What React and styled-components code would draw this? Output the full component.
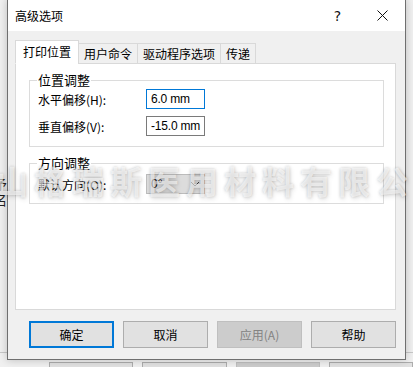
import React from "react";
import styled, { createGlobalStyle } from "styled-components";

const GlobalStyle = createGlobalStyle`
	html, body {
		margin: 0;
		padding: 0;
		background: #f0f0f0;
		font-family: "Noto Sans CJK SC", "Microsoft YaHei", sans-serif;
		font-size: 12px;
		color: #000;
	}
`;

const Desktop = styled.div`
	position: relative;
	width: 413px;
	height: 367px;
	overflow: hidden;
	background: #f0f0f0;
	display: flex;
	flex-direction: column;
`;

const BackWindow = styled.div`
	flex: 1;
	display: flex;
	flex-direction: column;
	justify-content: flex-end;
`;

const BackStrip = styled.div`
	flex: 1;
	width: 7px;
	display: flex;
	flex-direction: column;
	padding-top: 7px;
	font-size: 13px;
	line-height: 16px;
	overflow: hidden;
	color: #222;
	span {
		margin-left: -6px;
	}
`;

const BackGap = styled.div`
	height: ${(p) => p.$h}px;
`;

const BackRule = styled.div`
	height: 1px;
	background: #c8c8c8;
	margin-bottom: 9px;
`;

const BackButtons = styled.div`
	display: flex;
	gap: 9px;
	padding-left: 49px;
	height: 5px;
`;

const BackButton = styled.div`
	width: 84px;
	height: 10px;
	background: ${(p) => (p.$disabled ? "#cccccc" : "#e1e1e1")};
	border: 1px solid ${(p) => (p.$disabled ? "#bfbfbf" : "#adadad")};
`;

const Dialog = styled.div`
	position: absolute;
	left: 7px;
	top: -1px;
	width: 397px;
	height: 359px;
	border: 1px solid #6f6f6f;
	background: #f0f0f0;
	box-shadow: 0 0 8px rgba(0, 0, 0, 0.22);
	display: flex;
	flex-direction: column;
`;

const TitleBar = styled.div`
	height: 31px;
	background: #fff;
	display: flex;
	align-items: center;
	padding-left: 7px;
`;

const Title = styled.div`
	flex: 1;
	font-size: 12px;
	padding-bottom: 1px;
`;

const TitleButton = styled.div`
	width: 45px;
	height: 31px;
	display: flex;
	align-items: center;
	justify-content: center;
	font-family: "Segoe UI", "DejaVu Sans", sans-serif;
	font-size: 14px;
	color: #111;
`;

const Body = styled.div`
	flex: 1;
	display: flex;
	flex-direction: column;
	padding: 9px 8px 0 7px;
`;

const TabStrip = styled.div`
	display: flex;
	align-items: flex-end;
	height: 24px;
	position: relative;
	z-index: 1;
	margin-bottom: -1px;
`;

const Tab = styled.div`
	height: ${(p) => (p.$active ? "24px" : "21px")};
	padding: 0 ${(p) => (p.$active ? "7px" : "5px")};
	box-sizing: border-box;
	display: flex;
	align-items: center;
	border: 1px solid #d9d9d9;
	border-bottom: ${(p) => (p.$active ? "1px solid #fff" : "1px solid #d9d9d9")};
	margin-left: ${(p) => (p.$first ? "0" : "-1px")};
	background: ${(p) => (p.$active ? "#fff" : "#f0f0f0")};
	font-size: 12px;
	padding-bottom: 1px;
	white-space: nowrap;
`;

const Panel = styled.div`
	width: 381px;
	height: 247px;
	box-sizing: border-box;
	background: #fff;
	border: 1px solid #d9d9d9;
	padding: 8px 11px 0 13px;
	display: flex;
	flex-direction: column;
	gap: 8px;
`;

const Group = styled.fieldset`
	margin: 0;
	padding: ${(p) => p.$pt}px 8px 0 8px;
	border: 1px solid #dcdcdc;
	min-width: 0;
	display: flex;
	flex-direction: column;
	gap: 7px;
	height: ${(p) => p.$h}px;
	box-sizing: border-box;
`;

const Legend = styled.legend`
	padding: 0 1px;
	margin-left: -1px;
	font-size: 13px;
	line-height: 16px;
`;

const Row = styled.div`
	display: flex;
	align-items: center;
	height: 20px;
`;

const Label = styled.div`
	width: 108px;
	font-size: 12px;
	white-space: nowrap;
`;

const Input = styled.div`
	width: 59px;
	height: 20px;
	box-sizing: border-box;
	border: 1px solid ${(p) => (p.$focus ? "#0078d7" : "#7a7a7a")};
	background: #fff;
	display: flex;
	align-items: center;
	padding-left: 4px;
	font-family: "Segoe UI", "Liberation Sans", sans-serif;
	font-size: 12px;
	letter-spacing: -0.2px;
`;

const Combo = styled.div`
	width: 59px;
	height: 20px;
	box-sizing: border-box;
	border: 1px solid #bcbcbc;
	background: #dcdcdc;
	display: flex;
	align-items: center;
	justify-content: space-between;
	padding: 0 4px 0 4px;
	font-family: "Segoe UI", "Liberation Sans", sans-serif;
	font-size: 12px;
`;

const Footer = styled.div`
	display: flex;
	gap: 9px;
	padding: 11px 0 0 14px;
`;

const Button = styled.div`
	width: 85px;
	height: 27px;
	box-sizing: border-box;
	display: flex;
	align-items: center;
	justify-content: center;
	font-size: 12px;
	background: ${(p) => (p.$disabled ? "#cccccc" : "#e1e1e1")};
	border: ${(p) =>
		p.$primary ? "2px solid #0078d7" : p.$disabled ? "1px solid #bfbfbf" : "1px solid #adadad"};
	color: ${(p) => (p.$disabled ? "#838383" : "#000")};
	padding-bottom: 1px;
`;

const Watermark = styled.div`
	position: absolute;
	left: -4px;
	top: 157px;
	font-size: 32px;
	font-weight: 700;
	letter-spacing: 6px;
	white-space: nowrap;
	color: rgba(255, 255, 255, 0.6);
	text-shadow: 0 0 3px rgba(0, 0, 0, 0.2), 1px 2px 5px rgba(0, 0, 0, 0.12);
	pointer-events: none;
`;

const Chevron = () => (
	<svg width="10" height="6" viewBox="0 0 10 6">
		<path d="M1 1 L5 5 L9 1" fill="none" stroke="#444" strokeWidth="1" />
	</svg>
);

const CloseIcon = () => (
	<svg width="11" height="11" viewBox="0 0 11 11">
		<path d="M0.5 0.5 L10.5 10.5 M10.5 0.5 L0.5 10.5" stroke="#111" strokeWidth="1" />
	</svg>
);

const App = () => {
	const tabs = ["打印位置", "用户命令", "驱动程序选项", "传递"];

	return (
		<React.Fragment>
			<GlobalStyle />
			<Desktop>
				<BackWindow>
					<BackStrip>
						<span>?</span>
						<BackGap $h={153} />
						<span>予</span>
						<span>名</span>
					</BackStrip>
					<BackRule />
					<BackButtons>
						<BackButton />
						<BackButton />
						<BackButton $disabled />
						<BackButton />
					</BackButtons>
				</BackWindow>

				<Dialog>
					<TitleBar>
						<Title>高级选项</Title>
						<TitleButton>?</TitleButton>
						<TitleButton>
							<CloseIcon />
						</TitleButton>
					</TitleBar>
					<Body>
						<TabStrip>
							{tabs.map((t, i) => (
								<Tab key={t} $active={i === 0} $first={i === 0}>
									{t}
								</Tab>
							))}
						</TabStrip>
						<Panel>
							<Group $h={75} $pt={1}>
								<Legend>位置调整</Legend>
								<Row>
									<Label>水平偏移(H):</Label>
									<Input $focus>6.0 mm</Input>
								</Row>
								<Row>
									<Label>垂直偏移(V):</Label>
									<Input>-15.0 mm</Input>
								</Row>
							</Group>
							<Group $h={49} $pt={3}>
								<Legend>方向调整</Legend>
								<Row>
									<Label>默认方向(O):</Label>
									<Combo>
										<span>0°</span>
										<Chevron />
									</Combo>
								</Row>
							</Group>
						</Panel>
						<Footer>
							<Button $primary>确定</Button>
							<Button>取消</Button>
							<Button $disabled>应用(A)</Button>
							<Button>帮助</Button>
						</Footer>
					</Body>
				</Dialog>

				<Watermark>山格瑞斯医用材料有限公司</Watermark>
			</Desktop>
		</React.Fragment>
	);
};

export default App;
